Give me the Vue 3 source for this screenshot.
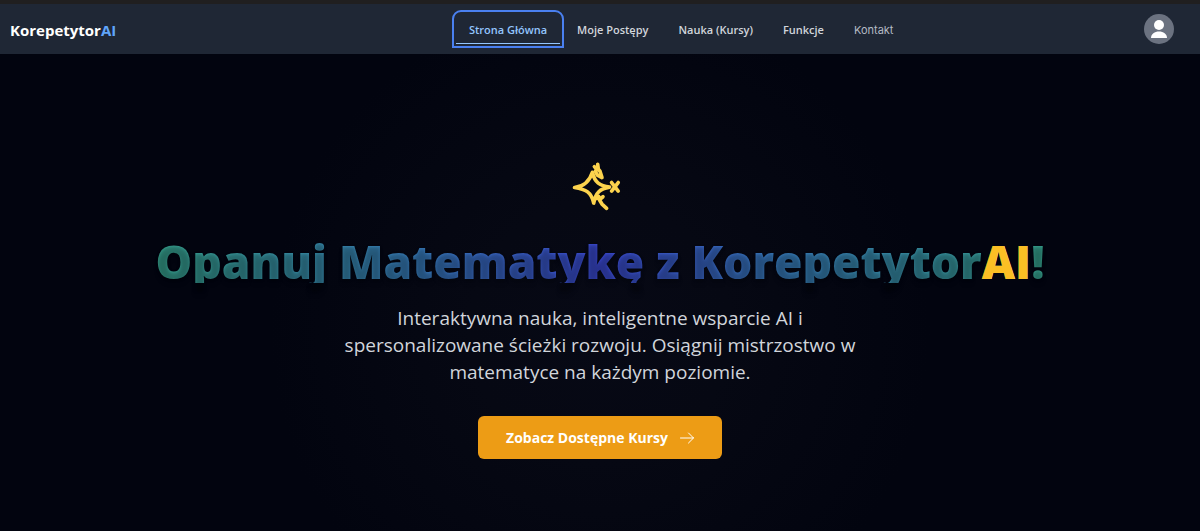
<script setup>
import { ref } from 'vue'

// Pozycje menu
const links = [
  { id: 'home', label: 'Strona Główna' },
  { id: 'progress', label: 'Moje Postępy' },
  { id: 'courses', label: 'Nauka (Kursy)' },
  { id: 'features', label: 'Funkcje' },
  { id: 'contact', label: 'Kontakt', light: true }
]

const active = ref('home')
</script>

<template>
  <div class="page">
    <header class="navbar">
      <div class="brand">
        <a href="#home" class="logo">Korepetytor<span>AI</span></a>
      </div>
      <nav class="menu">
        <a
          v-for="link in links"
          :key="link.id"
          :href="'#' + link.id"
          class="menu-link"
          :class="{ active: active === link.id, light: link.light }"
          @click="active = link.id"
        >{{ link.label }}</a>
      </nav>
      <div class="account">
        <button class="avatar" type="button" aria-label="Konto">
          <svg viewBox="0 0 30 30" width="30" height="30" fill="#fff">
            <circle cx="15" cy="11" r="5" />
            <path d="M7 24c0-4 3.600-6.500 8-6.500s8 2.500 8 6.500z" />
          </svg>
        </button>
      </div>
    </header>

    <main class="hero">
      <svg class="sparkle" viewBox="36 36 168 148" width="56" height="49">
        <path d="M43 113C72 110 88 96 97 67C104 98 120 109 149 112C120 117 107 128 101 160C94 128 78 118 43 113Z" />
        <path d="M103 50L110 58M113 43L115 58L120 64L126 83L112 76L106 64L112 56" />
        <path d="M155 98L175 124M175 98L155 124" />
        <path d="M109 146L116 140L118 150L126 163L140 176M118 150L129 141" />
      </svg>
      <h1 class="title">Opanuj Matematykę z Korepetytor<span>AI</span>!</h1>
      <p class="lead">
        Interaktywna nauka, inteligentne wsparcie AI i spersonalizowane ścieżki rozwoju. Osiągnij mistrzostwo w matematyce na każdym poziomie.
      </p>
      <button class="cta" type="button">
        Zobacz Dostępne Kursy
        <svg viewBox="0 0 14 12" width="14" height="12" fill="none" stroke="#fff" stroke-linecap="round" stroke-linejoin="round">
          <path d="M.5 6h13M8.500 1l5 5-5 5" />
        </svg>
      </button>
    </main>
  </div>
</template>

<style>
body {
  margin: 0;
  background: #02040f;
}
</style>

<style scoped>
.page {
  min-height: 100vh;
  box-sizing: border-box;
  border-top: 4px solid #201f20;
  background: radial-gradient(circle at 50% 62%, #070915 0, #060813 130px, #02040f 330px);
  font-family: "Open Sans", "Noto Sans", sans-serif;
  color: #d1d5db;
}

.navbar {
  display: flex;
  align-items: center;
  height: 50px;
  padding: 0 26px 0 10px;
  background: #1f2735;
}

.brand {
  flex: 5 1 0;
  padding-top: 2px;
}

.logo {
  font-size: 15px;
  font-weight: 700;
  color: #fff;
  text-decoration: none;
}

.logo span {
  color: #60a5fa;
}

.menu {
  display: flex;
  align-items: center;
  gap: 4px;
}

.menu-link {
  box-sizing: border-box;
  height: 30px;
  padding: 0 13px;
  border-bottom: 1px solid transparent;
  border-radius: 5px 5px 0 0;
  font-size: 11px;
  font-weight: 600;
  line-height: 32px;
  white-space: nowrap;
  color: #d1d5db;
  text-decoration: none;
}

.menu-link.active {
  border-bottom-color: #93c5fd;
  outline: 2px solid #4a80f0;
  outline-offset: 2px;
  color: #93c5fd;
}

.menu-link.light {
  font-family: Inter, sans-serif;
  font-weight: 400;
  color: #b4bac4;
}

.account {
  display: flex;
  flex: 3 1 0;
  justify-content: flex-end;
}

.avatar {
  width: 30px;
  height: 30px;
  padding: 0;
  border: none;
  border-radius: 50%;
  background: #6b7280;
  cursor: pointer;
}

.avatar svg {
  display: block;
}

.hero {
  display: flex;
  flex-direction: column;
  align-items: center;
  padding: 108px 24px 64px;
  text-align: center;
}

.sparkle {
  fill: none;
  stroke: #fcd34d;
  stroke-width: 11;
  stroke-linecap: round;
  stroke-linejoin: round;
}

.title {
  margin: 28px 0 22px;
  font-size: 46px;
  font-weight: 800;
  line-height: 44px;
  color: transparent;
  background: linear-gradient(to right, #36a08c, #3678b8 30%, #3a48d0 50%, #3678b8 70%, #36a08c);
  -webkit-background-clip: text;
  background-clip: text;
  text-shadow: 0 1px 3px rgba(0, 0, 0, 0.25), 0 5px 5px rgba(0, 0, 0, 0.1);
}

.title span {
  color: #fbbf24;
  text-shadow: none;
}

.lead {
  max-width: 520px;
  margin: 0;
  font-size: 19px;
  line-height: 27px;
}

.cta {
  display: flex;
  align-items: center;
  gap: 12px;
  height: 43px;
  margin-top: 30px;
  padding: 0 28px;
  border: none;
  border-radius: 6px;
  background: #ed9c15;
  font-family: inherit;
  font-size: 14px;
  font-weight: 700;
  color: #fff;
  cursor: pointer;
}
</style>
